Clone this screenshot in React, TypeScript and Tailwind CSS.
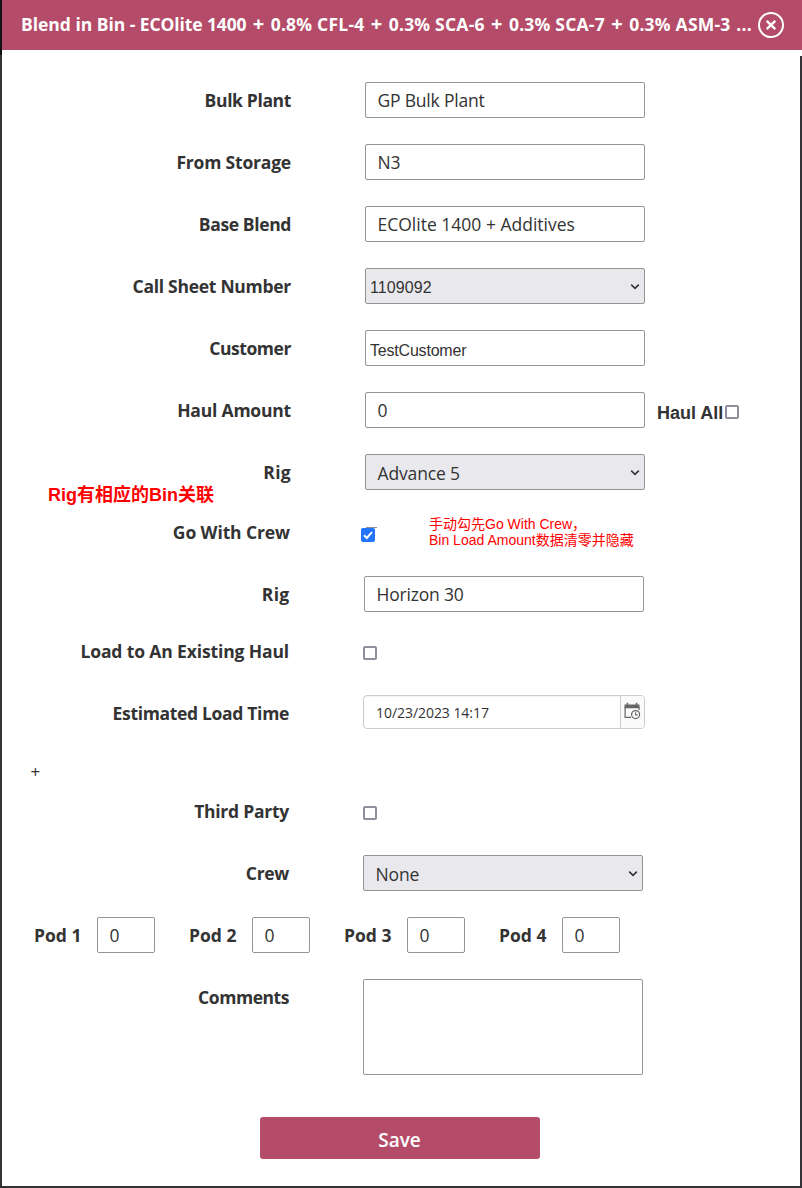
import type { ReactNode } from 'react';

const ui = "font-['Open_Sans','Noto_Sans',sans-serif]";
const arial = "font-['Liberation_Sans','Noto_Sans_CJK_SC',sans-serif]";

function Row({ label, indent, children, className = 'h-9 mb-[26px]', labelClass = 'w-[289px]', tracking = 'tracking-[-0.2px]' }: {
  label: string;
  indent?: string;
  children?: ReactNode;
  className?: string;
  labelClass?: string;
  tracking?: string;
}) {
  return (
    <div className={`flex shrink-0 ${className}`}>
      <div className={`shrink-0 whitespace-nowrap text-right text-[17.5px] leading-[36px] font-bold ${labelClass} ${tracking}`}>{label}</div>
      <div className={`flex ${indent ?? 'ml-[74px]'}`}>{children}</div>
    </div>
  );
}

function Field({ value, className = 'pl-[11.5px] text-[17.5px] leading-[34px] tracking-[-0.2px]', width = 'w-[280px]' }: {
  value: string;
  className?: string;
  width?: string;
}) {
  return (
    <div className={`h-9 shrink-0 overflow-hidden rounded-[2px] border border-[#949494] bg-white whitespace-nowrap ${width} ${className}`}>{value}</div>
  );
}

function SelectField({ value, className = 'pl-[11.5px] text-[17.5px] leading-[37px] tracking-[-0.15px]' }: { value: string; className?: string }) {
  return (
    <div className={`flex h-9 w-[280px] shrink-0 justify-between overflow-hidden rounded-[2px] border border-[#949494] bg-[#e9e9ed] whitespace-nowrap ${className}`}>
      <span>{value}</span>
      <svg className="mt-[14px] mr-[4px] h-[8px] w-[10px]" viewBox="0 0 10 8" fill="none" stroke="#333" strokeWidth="1.5">
        <path d="M1.2 1.6 5 5.4 8.8 1.6" />
      </svg>
    </div>
  );
}

function Check({ className = '' }: { className?: string }) {
  return <div className={`h-[14px] w-[14px] shrink-0 rounded-[2px] border-2 border-[#8f8f9d] bg-white ${className}`} />;
}

const pods = ['Pod 1', 'Pod 2', 'Pod 3', 'Pod 4'];
const additives = ['0.8% CFL-4', '0.3% SCA-6', '0.3% SCA-7', '0.3% ASM-3'];

export default function App() {
  return (
    <div className="flex h-[1188px] w-[802px] bg-white">
      <div className="flex w-[2px] shrink-0 flex-col bg-[#333335]">
        <div className="h-[55px] bg-[#111]" />
      </div>
      <div className={`relative flex w-[800px] flex-col overflow-hidden border-b-2 border-[#333335] bg-white text-[#333] ${ui}`}>
        <header className="flex h-[50px] shrink-0 items-center bg-[#b44c69] pl-[19px] text-white">
          <h1 className="h-[50px] w-[737px] whitespace-nowrap text-[17.5px] leading-[48px] font-bold tracking-[0.22px]">
            <span className="tracking-[-0.03px]">Blend in Bin - </span>
            <span className="tracking-[-0.12px]">ECOlite 1400</span>
            {additives.map((item) => (
              <span key={item}> <span className="px-[1.5px] text-[20px] leading-none">+</span> {item}</span>
            ))}
            <span className="pl-[1px]"> ...</span>
          </h1>
          <svg className="h-[26px] w-[26px] shrink-0" viewBox="0 0 26 26" fill="none" stroke="white">
            <circle cx="13" cy="13" r="12" strokeWidth="2" />
            <path d="M8.7 8.9 17.3 17.1M17.3 8.9 8.7 17.1" strokeWidth="2.4" />
          </svg>
        </header>

        <main className="mt-[6px] flex grow flex-col border-r-2 border-[#333335] pt-[26px]">
          <Row label="Bulk Plant" tracking="tracking-[-0.36px]"><Field value="GP Bulk Plant" /></Row>
          <Row label="From Storage"><Field value="N3" /></Row>
          <Row label="Base Blend" tracking="tracking-[-0.38px]">
            <Field value="ECOlite 1400 + Additives" className="pl-[11.5px] text-[17.5px] leading-[34px]" />
          </Row>
          <Row label="Call Sheet Number" tracking="tracking-[-0.28px]">
            <SelectField value="1109092" className={`pl-[4px] text-[16px] leading-[37px] tracking-[0.1px] ${arial}`} />
          </Row>
          <Row label="Customer" tracking="tracking-[-0.43px]">
            <Field value="TestCustomer" className={`pl-[4px] text-[16px] leading-[39px] tracking-[-0.2px] ${arial}`} />
          </Row>
          <Row label="Haul Amount">
            <Field value="0" />
            <div className={`ml-3 flex text-[18px] leading-[42px] font-bold ${arial}`}>
              Haul All
              <Check className="mt-[13px] ml-[2px]" />
            </div>
          </Row>
          <Row label="Rig" className="h-9 mb-[24px]" tracking="tracking-[0.3px]"><SelectField value="Advance 5" /></Row>
          <Row label="Go With Crew" labelClass="w-[288px]" indent="ml-[71px]" tracking="tracking-[-0.1px]">
            <svg className="mt-[13px] h-[15px] w-[16px]" viewBox="0 0 16 15" fill="none">
              <path d="M5 .5h11" stroke="#8f8f9d" strokeWidth="1" />
              <rect y="1" width="14" height="14" rx="2" fill="#2374ff" />
              <path d="M3 8.2 5.8 11 11 5.2" stroke="white" strokeWidth="2" />
            </svg>
          </Row>
          <Row label="Rig" labelClass="w-[287.5px]" indent="ml-[74.5px]" className="h-9 mb-[21px]" tracking="tracking-[0.3px]"><Field value="Horizon 30" /></Row>
          <Row label="Load to An Existing Haul" labelClass="w-[287px]" tracking="tracking-[-0.13px]"><Check className="mt-[13px]" /></Row>
          <Row label="Estimated Load Time" labelClass="w-[287px]" tracking="tracking-[-0.33px]">
            <div className="flex h-[34px] w-[282px] overflow-hidden rounded-[4px] border border-[#ccc] bg-white">
              <div className="grow pl-[12px] text-[14px] leading-[34px] tracking-[-0.05px] shadow-[inset_0_1px_1px_#0000000d]">10/23/2023 14:17</div>
              <div className="w-[24px] border-l border-[#ccc] bg-[#fafafa] pt-[6px] pl-[3px]">
                <svg className="h-[18px] w-[17px]" viewBox="0 0 17 18" fill="none" stroke="#666">
                  <path d="M.5 2.5h15v3.8H.5z" fill="#666" stroke="none" />
                  <path d="M3.5 .8v2.5M12.5 .8v2.5" strokeWidth="1.6" />
                  <path d="M1.1 5v10.4H7M15 5v3" strokeWidth="1.2" />
                  <circle cx="11.6" cy="12.6" r="4" strokeWidth="1.2" />
                  <path d="M11.6 10.2v2.7h2" strokeWidth="1.1" />
                </svg>
              </div>
            </div>
          </Row>
          <div className="mb-[12px] h-6 shrink-0 pt-px pl-[28.5px] text-[17px] leading-[28px]">+</div>
          <Row label="Third Party" labelClass="w-[287px]" tracking="tracking-[-0.25px]"><Check className="mt-[13px]" /></Row>
          <Row label="Crew" labelClass="w-[287px]" tracking="tracking-[-0.3px]"><SelectField value="None" /></Row>
          <div className="mb-[26px] flex shrink-0 pl-[32px]">
            {pods.map((pod) => (
              <div key={pod} className="flex h-9 w-[155px]">
                <div className="w-[63px] shrink-0 whitespace-nowrap text-[17.5px] leading-[36px] font-bold">{pod}</div>
                <Field value="0" width="w-[58px]" />
              </div>
            ))}
          </div>
          <Row label="Comments" labelClass="w-[287px]" className="h-24 mb-[42px]" tracking="tracking-[-0.45px]">
            <div className="h-24 w-[280px] rounded-[2px] border border-[#949494] bg-white" />
          </Row>
          <button className="ml-[258px] h-[42px] w-[280px] shrink-0 rounded-[3px] bg-[#b44c69] pt-[5px] pr-px text-[19px] font-semibold text-white">Save</button>
        </main>

        <div className={`absolute top-[484px] left-[46px] whitespace-nowrap text-[18px] leading-[22px] font-bold text-[#f00] ${arial}`}>Rig有相应的Bin关联</div>
        <div className={`absolute top-[516px] left-[427px] whitespace-nowrap text-[14px] leading-[16px] text-[#f00] ${arial}`}>
          手动勾先Go With Crew，<br />Bin Load Amount数据清零并隐藏
        </div>
      </div>
    </div>
  );
}
